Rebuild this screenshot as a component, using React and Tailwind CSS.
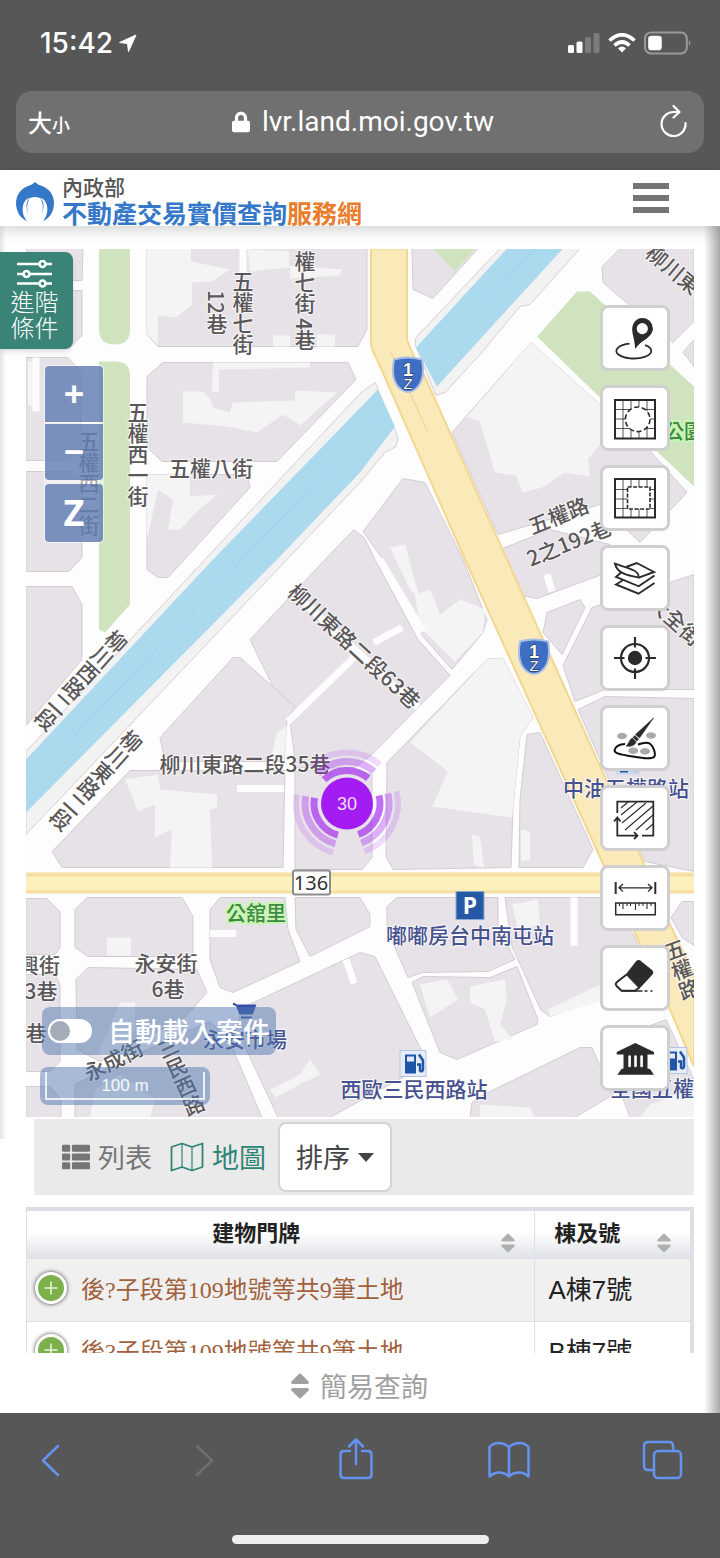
import React, { useState } from 'react';
import { FaLocationArrow, FaLock, FaSort, FaThList } from 'react-icons/fa';

const BLOCKS = [
  '26,249 83,249 82,281 26,281',
  '26,291 82,291 82,336 70,348 26,348',
  '26,358 68,358 81,373 81,447 68,461 26,461',
  '26,472 72,472 82,480 82,558 69,572 26,572',
  '26,587 72,587 82,605 82,660 26,726',
  '147,249 367,249 367,330 358,347 158,347 147,335',
  '163,363 348,363 356,380 277,462 162,462 147,448 147,377',
  '147,475 247,475 250,488 168,578 158,578 147,570',
  '363,532 403,479 425,483 463,560 487,620 483,633 452,670 423,637 383,560',
  '250,640 325,560 354,530 364,538 375,560 418,640 450,676 413,713 372,755 355,768 296,768 290,722',
  '233,658 240,658 295,707 287,720 284,762 165,762 160,738',
  '130,771 285,771 283,868 62,868 52,852',
  '295,772 345,768 372,775 372,858 362,870 295,870',
  '488,659 503,659 533,718 520,737 513,807 511,868 393,870 386,857 387,763',
  '527,735 540,733 593,850 583,868 519,868 520,800',
  '412,249 478,249 433,299 413,290',
  '602,267 620,249 694,249 694,322 673,343 603,283',
  '683,353 694,340 694,367',
  '531,343 600,405 640,440 687,493 640,543 600,505 498,535 452,433',
  '500,550 550,530 610,545 610,572 537,599 521,596',
  '547,613 580,600 585,608 562,655 543,633',
  '592,608 694,575 694,690 605,690 575,702 563,666',
  '578,710 605,697 694,699 694,872 645,862',
  '26,899 47,899 60,912 60,948 55,955 26,955',
  '87,898 182,898 193,917 193,957 88,957 75,948 75,910',
  '26,975 55,975 60,985 60,1062 50,1072 26,1072',
  '88,968 197,970 207,993 185,1018 100,1062 77,1050 76,980',
  '75,1085 110,1067 210,1022 228,1038 262,1118 75,1118',
  '26,1087 50,1087 61,1100 61,1118 26,1118',
  '220,898 285,898 288,930 300,962 233,993 220,988 210,960 210,910',
  '295,898 360,898 370,915 370,927 310,957 296,930',
  '243,1008 360,953 375,957 422,1052 408,1075 330,1118 278,1118 236,1028',
  '397,898 498,898 498,927 515,960 488,972 423,973 408,978 387,930 387,907',
  '412,983 423,977 490,978 517,967 538,1020 537,1025 457,1060 440,1053',
  '505,898 600,898 632,933 655,980 550,1017 541,1011 512,947',
  '470,1118 472,1103 480,1097 580,1048 592,1048 613,1095 575,1118',
  '640,1030 666,1020 694,1080 694,1118 630,1118 614,1075',
  '671,918 682,902 694,902 694,946 682,938',
];

// open yards and unbuilt plots inside the blocks
const YARDS = [
  '147,249 191,249 191,262 230,270 212,282 192,283 192,305 176,318 158,316 158,345 147,335',
  '248,250 250,272 290,268 290,279 340,276 342,270 289,266 289,252',
  '273,336 290,336 290,347 273,347',
  '317,335 335,335 335,347 317,347',
  '183,392 203,392 210,400 213,408 230,413 233,403 295,401 295,391 337,393 300,426 283,415 257,433 227,427 183,423',
  '213,363 310,363 310,368 219,370 219,392 212,392',
  '147,475 190,475 190,497 217,495 197,512 180,530 168,530 173,500 158,490 147,540',
  '28,362 33,362 36,410 28,405',
  '488,659 503,659 533,718 520,737 512,818 432,807 448,772 410,743',
  '531,343 600,405 600,445 588,460 590,477 565,473 542,488 523,493 516,476 495,473 480,422 467,417',
  '415,595 430,590 440,615 460,600 485,610 483,633 455,662 420,628',
  '390,548 405,545 420,600 410,590',
  '125,780 158,775 160,790 217,795 217,808 210,810 212,868 170,868 172,830 155,838 155,805 138,812',
  '277,733 287,727 284,760 271,758',
  '107,938 131,938 131,956 107,956',
  '120,1003 135,1003 135,1030 115,1060 98,1055',
  '95,1090 120,1075 155,1100 150,1118 90,1118',
  '270,1090 300,1075 310,1060 320,1075 300,1085 275,1098',
  '420,985 447,980 458,1000 430,1018',
  '470,987 505,980 507,1000 500,1025 513,1040 495,1042 485,1010 470,1003',
  '512,905 538,900 540,925 518,930',
  '548,1010 600,985 640,990 550,1017',
  '472,835 480,837 484,868 474,866',
  '521,830 530,832 530,860 521,862',
  '480,1105 530,1108 535,1118 480,1118',
  '650,1105 694,1090 694,1118 640,1118',
];

const STREETS = [
  'M243 249V273',
  'M290 590L418 708',
  'M288 722L356 656',
  'M574 898V946',
  'M547 575L552 592',
  'M237 789H284',
  'M210 934H236',
  'M346 960L354 984',
  'M36 358V412',
  'M374 643L402 628M380 560L423 632',
];

const LABELS = [
  { text: '五權七街', x: 243, y: 313, vertical: true },
  { text: '12巷', x: 217, y: 313, vertical: true },
  { text: '權七街 4巷', x: 305, y: 301, vertical: true },
  { text: '五權西一街', x: 138, y: 455, vertical: true },
  { text: '五權西二街', x: 89, y: 484, vertical: true },
  { text: '五權八街', x: 211, y: 467 },
  { text: '柳川西路二段', x: 81, y: 681, vertical: true, rotate: 42 },
  { text: '柳川東路二段', x: 96, y: 781, vertical: true, rotate: 42 },
  { text: '柳川東路二段63巷', x: 355, y: 646, rotate: 43 },
  { text: '柳川東路二段35巷', x: 245, y: 763 },
  { text: '柳川東', x: 674, y: 269, rotate: 40 },
  { text: '五權路', x: 558, y: 515, rotate: -22 },
  { text: '2之192巷', x: 569, y: 542, rotate: -22 },
  { text: '大全街', x: 676, y: 620, rotate: 42 },
  { text: '永安街', x: 166, y: 962 },
  { text: '6巷', x: 168, y: 988 },
  { text: '興街', x: 39, y: 964 },
  { text: '3巷', x: 41, y: 990 },
  { text: '巷', x: 36, y: 1032 },
  { text: '永成街', x: 113, y: 1060, rotate: -27 },
  { text: '三民西路', x: 181, y: 1077, vertical: true, rotate: -24 },
  { text: '五權路', x: 682, y: 970, vertical: true, rotate: -20 },
];

const PLACES = [
  { text: '嘟嘟房台中南屯站', x: 470, y: 934 },
  { text: '西歐三民西路站', x: 414, y: 1088 },
  { text: '中油五權路站', x: 626, y: 787 },
  { text: '全國五權', x: 652, y: 1087 },
  { text: '永安市場', x: 245, y: 1038 },
];

const ROWS = [
  { id: 1, address: '後?子段第109地號等共9筆土地', unit: 'A棟7號' },
  { id: 2, address: '後?子段第109地號等共9筆土地', unit: 'B棟7號' },
];

const MapLabel = ({ text, x, y, rotate = 0, vertical = false }) => (
  <text
    transform={`translate(${x} ${y}) rotate(${rotate})`}
    textAnchor="middle"
    dominantBaseline="central"
    className={vertical ? '[writing-mode:vertical-rl]' : ''}
  >
    {text}
  </text>
);

const RouteShield = ({ x, y }) => (
  <g transform={`translate(${x} ${y})`} className="font-['Liberation_Sans',sans-serif]">
    <path d="M-14 -15Q0 -19 14 -15Q18 6 7 15Q0 20 -7 15Q-18 6 -14 -15Z" fill="#3f6fc4" stroke="#a9bfe4" strokeWidth="2" />
    <text textAnchor="middle" y="1" fontSize="18" fontWeight="700" fill="#fff" stroke="#1c2c50" strokeWidth="1" paintOrder="stroke">1</text>
    <text textAnchor="middle" y="14" fontSize="15" fill="#fff" stroke="#1c2c50" strokeWidth="1" paintOrder="stroke">Z</text>
  </g>
);

const GasStation = ({ x, y }) => (
  <g transform={`translate(${x} ${y})`}>
    <rect x="-13" y="-13" width="26" height="26" fill="#e6edf8" stroke="#b5c4e0" />
    <path d="M-8 -9H3V10H-8Z" fill="#1f56a8" />
    <path d="M-6 -7H1V-2H-6Z" fill="#e6edf8" />
    <path d="M4 1H7V7Q9 9 10 6V-3L6 -9" fill="none" stroke="#1f56a8" strokeWidth="2.5" />
  </g>
);

const arcPath = (radius, center) => {
  const point = (deg) => {
    const rad = (deg * Math.PI) / 180;
    return `${radius * Math.cos(rad)} ${radius * Math.sin(rad)}`;
  };
  return `M${point(center - 42)}A${radius} ${radius} 0 0 1 ${point(center + 42)}`;
};

const ClusterMarker = ({ x, y, count }) => (
  <g transform={`translate(${x} ${y})`}>
    {[28, 148, 268].map((center) => (
      <g key={center} fill="none" stroke="#a020f0">
        <path d={arcPath(33, center)} strokeWidth="7" strokeOpacity="0.65" />
        <path d={arcPath(42, center)} strokeWidth="7" strokeOpacity="0.35" />
        <path d={arcPath(51, center)} strokeWidth="6" strokeOpacity="0.16" />
      </g>
    ))}
    <circle r="26" fill="#a31df3" />
    <text textAnchor="middle" y="6" fontSize="18" fill="#f3dcff" className="font-['Liberation_Sans',sans-serif]">{count}</text>
  </g>
);

const StreetMap = () => (
  <svg
    viewBox="26 249 668 869"
    preserveAspectRatio="xMidYMid slice"
    className="absolute inset-0 h-full w-full font-['Noto_Sans_CJK_TC',sans-serif]"
    role="img"
    aria-label="地圖"
  >
    <rect x="26" y="249" width="668" height="869" fill="#fefdfe" />
    <g fill="#e7e2e8" stroke="#d3cdd2" strokeWidth="1" strokeLinejoin="round">
      {BLOCKS.map((points) => <polygon key={points} points={points} />)}
    </g>
    <g fill="#f5f4f5">
      {YARDS.map((points) => <polygon key={points} points={points} />)}
    </g>
    <g fill="none" stroke="#fefdfe" strokeWidth="7">
      {STREETS.map((d) => <path key={d} d={d} />)}
    </g>

    {/* green belts and park */}
    <g fill="#cfe3bf">
      <path d="M99 249H130V330Q130 345 115 345Q99 345 99 330Z" />
      <path d="M99 362H115Q130 362 130 376V605L105 633L99 630Z" />
      <polygon points="433,249 475,249 455,272" />
      <polygon points="537,337 577,292 590,292 610,310 694,387 694,487 655,450 600,398" />
    </g>

    {/* canal */}
    <g fill="#f3f2f2" stroke="#d6cfcd" strokeWidth="1">
      <polygon points="26,752 205,560 360,394 375,383 398,438 396,447 385,453 360,483 287,560 26,835" />
      <polygon points="415,345 416,338 500,249 580,249 530,305 520,307 480,355 445,393 436,396" />
    </g>
    <g fill="#abd9ee">
      <polygon points="26,760 213,560 378,390 395,427 360,473 277,560 26,813" />
      <polygon points="416,348 507,249 563,249 437,387" />
    </g>
    <path d="M26 787L245 557L383 412M428 362L536 249" fill="none" stroke="#9bcfea" strokeWidth="1" />

    {/* provincial road and county road 136 */}
    <polygon points="26,873 694,873 694,894 26,894" fill="#f6dfa2" />
    <polygon points="26,877 694,877 694,891 26,891" fill="#fcf0bd" />
    <path
      d="M371 249H407V340Q412 355 423 373L507 560L643 862L670 925L694 975V1067L670 1010L602 862L465 560L377 360Q371 350 371 343Z"
      fill="#fae9b9"
      stroke="#f3d690"
      strokeWidth="2"
    />
    <path d="M391 352L428 433" stroke="#f3d084" strokeWidth="1" />

    <g fontSize="21" fontWeight="500" fill="#5a5759" stroke="#fff" strokeWidth="2" strokeOpacity="0.7" paintOrder="stroke">
      {LABELS.map((label, index) => <MapLabel key={index} {...label} />)}
    </g>
    <g fontSize="21" fontWeight="500" fill="#47518f" stroke="#fff" strokeWidth="2" strokeOpacity="0.8" paintOrder="stroke">
      {PLACES.map((label) => <MapLabel key={label.text} {...label} />)}
    </g>
    <g fontSize="20" fontWeight="500" stroke="#c9f5b4" strokeWidth="4" paintOrder="stroke" fill="#3d8a45">
      <MapLabel text="公舘里" x={256} y={913} />
      <MapLabel text="公園" x={684} y={431} />
    </g>

    <rect x="293" y="871" width="37" height="24" rx="2" fill="#fff" stroke="#8c8c8c" strokeWidth="2" />
    <text x="311" y="890" textAnchor="middle" fontSize="20" fill="#333" className="font-['Noto_Sans',sans-serif]">136</text>
    <RouteShield x={408} y={375} />
    <RouteShield x={534} y={657} />

    <rect x="456" y="892" width="28" height="28" fill="#2558a5" stroke="#8faad2" />
    <text x="470" y="914" textAnchor="middle" fontSize="23" fontWeight="700" fill="#fff" className="font-['Noto_Sans',sans-serif]">P</text>
    <GasStation x={413} y={1064} />
    <GasStation x={674} y={1061} />
    <path d="M233 1004L237 1006L240 1014H252L255 1006H238M241 1018H252" fill="#3550a8" stroke="#3550a8" strokeWidth="2" />
    <path d="M616 768H640V775H616Z" fill="#c9d8ee" />
    <path d="M620 766H628V773H620ZM632 766H636V773" fill="#2558a5" />

    <ClusterMarker x={347} y={804} count={30} />
  </svg>
);

const ToolIcon = ({ children }) => (
  <svg viewBox="0 0 44 44" className="size-11" fill="none" stroke="#2b2b2b" strokeWidth="1.6" aria-hidden="true">
    {children}
  </svg>
);

const GRID_LINES = 'M10 4V42M18 4V42M26 4V42M34 4V42M2 13.5H42M2 23H42M2 32.5H42';

const TOOLS = [
  {
    name: '定位點',
    icon: (
      <ToolIcon>
        <path d="M32 29.2A17.5 7.5 0 1 1 16.5 27.7" strokeWidth="1.8" />
        <path
          d="M29.3 2A10.6 10.6 0 0 1 39.9 12.6C39.9 17 36 21.5 31.5 24C27.5 26.5 24.5 29.5 22.2 33C22 27 20.5 22 19.5 17C18 9 22 2 29.3 2ZM29.3 7A5.6 5.6 0 1 0 29.3 18.2A5.6 5.6 0 1 0 29.3 7Z"
          fill="#2b2b2b"
          fillRule="evenodd"
          stroke="none"
        />
      </ToolIcon>
    ),
  },
  {
    name: '圓形範圍',
    icon: (
      <ToolIcon>
        <path d={GRID_LINES} strokeWidth="0.8" />
        <rect x="2" y="4" width="40" height="38.5" strokeWidth="2" />
        <circle cx="24.7" cy="23.3" r="12.3" fill="#fff" strokeDasharray="5 2.7" />
      </ToolIcon>
    ),
  },
  {
    name: '矩形範圍',
    icon: (
      <ToolIcon>
        <path d={GRID_LINES} strokeWidth="0.8" />
        <rect x="2" y="3" width="40" height="38.5" strokeWidth="2" />
        <rect x="14.5" y="11" width="22.5" height="22" fill="#fff" strokeDasharray="4 1.6" />
      </ToolIcon>
    ),
  },
  {
    name: '圖層',
    icon: (
      <ToolIcon>
        <path d="M2 7.7C7 9.5 16 12 21 14.5C24 16 26 19 25.5 21.5C17 20 4 18 2 7.7Z" strokeWidth="1.9" />
        <path d="M13 11L23.7 7L41 16L25.7 21.7M8 16.5L3 21L25.7 30.3L41.5 19.5M9.5 24.5L3 28.5L25.5 37.7L41.5 27" strokeWidth="1.9" />
      </ToolIcon>
    ),
  },
  {
    name: '目前位置',
    icon: (
      <ToolIcon>
        <circle cx="22" cy="22" r="14" strokeWidth="2.2" />
        <circle cx="22" cy="22" r="7.2" fill="#2b2b2b" stroke="none" />
        <path d="M1 22H11.5M32.5 22H43M22 1V11.5M22 32.5V43" strokeWidth="2.2" />
      </ToolIcon>
    ),
  },
  {
    name: '調色',
    icon: (
      <ToolIcon>
        <g fill="#a9a9a9" stroke="none">
          <ellipse cx="9" cy="20" rx="5" ry="3.2" />
          <ellipse cx="38" cy="19.5" rx="5" ry="3.2" />
          <ellipse cx="20.3" cy="34.7" rx="5" ry="3.2" />
          <ellipse cx="32" cy="35.3" rx="5" ry="3.2" />
        </g>
        <path d="M12 28C6 28 2 31 1.5 34.5C2 38.5 12 39 20 40.5C28 42 38 43.5 41 41C43.5 38 40 30 37 27.8C34 25.5 29 27 25 28.5" stroke="#111" strokeWidth="2" />
        <path d="M40.5 2L26.5 22L22.5 18.5ZM21.8 19.5L25.5 23L24 25L20 21.5ZM19.3 22L23.2 25.8C22 29.5 18 31 13 30C16 28 16 24 19.3 22Z" fill="#2b2b2b" stroke="#2b2b2b" strokeWidth="0.6" />
      </ToolIcon>
    ),
  },
  {
    name: '量測面積',
    icon: (
      <ToolIcon>
        <path d="M4.3 17V5.7H40.3V39.7H29M4.3 22V39.7H24M1 25.5L4.3 21.5L7.6 25.5M21 36.2L24.5 39.7L21 43.2" strokeWidth="1.8" />
        <path d="M8 12L15 6M8 19L24 6M9 27L33 7M12 34L40 10M23 34L40 19M33 34L40 28" strokeWidth="1.1" />
      </ToolIcon>
    ),
  },
  {
    name: '量測距離',
    icon: (
      <ToolIcon>
        <path d="M2.7 6V18M42.3 6V18" strokeWidth="2" />
        <path d="M6 11.8H39M10 8L6 11.8L10 15.6M35 8L39 11.8L35 15.6" strokeWidth="1.3" />
        <path d="M2.7 27H42.3V38.7H2.7Z" strokeWidth="1.5" />
        <path d="M6.5 27V30M10 27V33M14 27V30M17.5 27V30M22.5 27V34M26 27V30M30 27V30M34 27V33M38 27V30" strokeWidth="1.1" />
      </ToolIcon>
    ),
  },
  {
    name: '清除',
    icon: (
      <ToolIcon>
        <path d="M13.7 18.5L23.5 6Q25.5 3.8 28 6L38.5 14.5Q40.3 16.2 38.7 18.3L26.3 31.7Z" fill="#2b2b2b" />
        <path d="M13.7 18.5L4.3 25.7Q1.5 28 3.8 30.2L8.5 34.7H22L26.3 31.5" strokeWidth="2" />
        <path d="M9 35H29.5M31.5 35H34.5M37.5 35H39.5" />
      </ToolIcon>
    ),
  },
  {
    name: '公共設施',
    icon: (
      <ToolIcon>
        <path d="M22.3 7L41 16V18.5H34.5V32.5L37 33L41 38.7H4.3L8.5 33L10.5 32.5V18.5H3.7V16Z" fill="#2b2b2b" stroke="none" />
        <path d="M16.6 20.5V30M22.5 20.5V30M28.6 20.5V30" stroke="#fff" strokeWidth="2.6" strokeLinecap="round" />
      </ToolIcon>
    ),
  },
];

const StatusBar = () => (
  <div className="flex items-center justify-between px-10 pt-[27px] pb-8 text-white">
    <div className="flex items-center gap-1.5">
      <span className="text-[28px] leading-8 font-medium">15:42</span>
      <svg viewBox="0 0 18 18" className="size-[18px]" aria-hidden="true">
        <path d="M17 1L0.500 8.500L8.500 9.500L9.500 17.500Z" fill="#fff" stroke="#fff" strokeLinejoin="round" />
      </svg>
    </div>
    <div className="-mr-3 flex items-center gap-2">
      <svg viewBox="0 0 32 22" className="h-6 w-8" aria-hidden="true">
        <rect x="0" y="13" width="6" height="8" rx="1.5" fill="#fff" />
        <rect x="8.5" y="9.5" width="6" height="11.5" rx="1.5" fill="#fff" />
        <rect x="17" y="5" width="6" height="16" rx="1.5" fill="#7c7c7c" />
        <rect x="25.5" y="1" width="6" height="20" rx="1.5" fill="#7c7c7c" />
      </svg>
      <svg viewBox="0 0 28 20" className="h-5 w-7" fill="none" stroke="#fff" strokeWidth="3.6" aria-hidden="true">
        <path d="M1.5 7.5Q14 -4 26.5 7.5" />
        <path d="M6.5 12.5Q14 5.5 21.5 12.5" />
        <path d="M10 15.2Q14 12 18 15.2L14 19.5Z" fill="#fff" stroke="none" />
      </svg>
      <svg viewBox="0 0 46 22" className="h-6 w-12" aria-hidden="true">
        <rect x="1" y="1" width="40" height="20" rx="5.5" fill="none" stroke="#9a9a9a" strokeWidth="2" />
        <rect x="4" y="4" width="13" height="14" rx="3" fill="#fff" />
        <path d="M43 8Q46 11 43 14Z" fill="#9a9a9a" />
      </svg>
    </div>
  </div>
);

const AddressBar = () => (
  <div className="mx-4 flex h-[62px] items-center justify-between rounded-2xl bg-[#707070] px-3 text-white">
    <button type="button" className="flex items-baseline font-['Noto_Sans_CJK_TC',sans-serif] font-medium">
      <span className="text-2xl leading-8">大</span>
      <span className="text-lg">小</span>
    </button>
    <div className="flex items-center gap-3">
      <FaLock className="h-6 w-[18px]" />
      <span className="font-['Roboto',sans-serif] text-[28px] leading-8">lvr.land.moi.gov.tw</span>
    </div>
    <button type="button" aria-label="重新載入">
      <svg viewBox="0 0 32 36" className="h-9 w-9" fill="none" stroke="#fff" strokeWidth="2.2" strokeLinecap="round" strokeLinejoin="round">
        <path d="M27.5 19A12 12 0 1 1 16 8H21" />
        <path d="M15.5 2L21.500 8L15.5 13.5" />
      </svg>
    </button>
  </div>
);

const SiteHeader = () => (
  <header className="relative z-10 flex h-14 items-center justify-between bg-white pr-[51px] pl-4 shadow-[0_4px_14px_rgba(0,0,0,0.18)]">
    <a href="#home" className="flex items-center gap-2 font-['Noto_Sans_CJK_TC',sans-serif]">
      <svg viewBox="0 0 38 40" className="mt-2 h-10 w-[38px]" aria-hidden="true">
        <path
          d="M19 0C21 2 23 3 26 4C34 7 38 14 38 21C38 30 33 37 27 39C31 34 32 29 31 24C30 19 27 16 24 16C27 20 28 27 25 34C27 30 29 22 26 18C24 14 14 14 12 18C9 22 11 30 13 34C10 27 11 20 14 16C11 16 8 19 7 24C6 29 7 34 11 39C5 37 0 30 0 21C0 14 4 7 12 4C15 3 17 2 19 0Z"
          fill="#3577c8"
        />
      </svg>
      <span className="flex flex-col">
        <span className="text-[21px] leading-7 font-medium text-[#555]">內政部</span>
        <span className="text-[25px] leading-6 font-bold text-[#3577c8]">
          不動產交易實價查詢<span className="text-[#ea7d2c]">服務網</span>
        </span>
      </span>
    </a>
    <button type="button" aria-label="選單" className="flex w-9 flex-col gap-1.5">
      <span className="h-[6px] bg-[#757575]" />
      <span className="h-[6px] bg-[#757575]" />
      <span className="h-[6px] bg-[#757575]" />
    </button>
  </header>
);

const MapPanel = () => {
  const [autoLoad, setAutoLoad] = useState(false);

  return (
    <div className="relative min-h-[820px] flex-1 overflow-hidden">
      <StreetMap />

      <div className="absolute top-[116px] left-[18px] flex flex-col rounded bg-white/50 p-px font-['Open_Sans',sans-serif] font-bold text-white">
        <button type="button" aria-label="放大" className="h-14 w-[58px] rounded-t bg-[#4466a4]/70 text-4xl">+</button>
        <button type="button" aria-label="縮小" className="mt-0.5 h-14 w-[58px] rounded-b bg-[#4466a4]/70 text-4xl">−</button>
        <button type="button" className="mt-1 h-[58px] w-[58px] rounded bg-[#4466a4]/70 text-4xl">Z</button>
      </div>

      <div className="absolute top-14 right-6 flex flex-col gap-3.5">
        {TOOLS.map((tool) => (
          <button
            key={tool.name}
            type="button"
            aria-label={tool.name}
            className="flex h-[66px] w-[70px] items-center justify-center rounded-lg border-[3px] border-[#cfcfcf] bg-white"
          >
            {tool.icon}
          </button>
        ))}
      </div>

      <div className="absolute bottom-3 left-3.5 flex flex-col items-start gap-3">
        <label className="ml-0.5 flex h-12 items-center gap-4 rounded-lg bg-[#5277b0]/50 px-1.5 font-['Noto_Sans_CJK_TC',sans-serif] text-[27px] leading-8 font-medium text-white">
          <input
            type="checkbox"
            role="switch"
            checked={autoLoad}
            onChange={(e) => setAutoLoad(e.target.checked)}
            className="h-6 w-11 appearance-none rounded-full bg-white before:block before:size-6 before:rounded-full before:border-2 before:border-white before:bg-[#a3adb9] checked:before:translate-x-5"
          />
          自動載入案件
        </label>
        <div className="h-[38px] w-[170px] rounded-lg bg-[#5277b0]/50 px-[5px] py-[5px]">
          <div className="h-full border-2 border-t-0 border-white/80 text-center font-['Liberation_Sans',sans-serif] text-[17px] leading-7 text-white/90">
            100 m
          </div>
        </div>
      </div>
    </div>
  );
};

const ViewBar = () => (
  <div className="mt-0.5 ml-2 flex h-[76px] items-center bg-[#eaeaea] pl-7 font-['Noto_Sans_CJK_TC',sans-serif] text-[27px] leading-9">
    <button type="button" className="flex items-center gap-2 text-[#757575]">
      <FaThList className="size-7" />
      列表
    </button>
    <button type="button" className="ml-[18px] flex items-center gap-2 text-[#2f8575]">
      <svg viewBox="0 0 34 30" className="h-[30px] w-[34px]" fill="none" stroke="currentColor" strokeWidth="1.8" strokeLinejoin="round" aria-hidden="true">
        <path d="M1.5 5L12 1.5L22 5L32.5 1.5V25L22 28.5L12 25L1.5 28.5Z" />
        <path d="M12 1.5V25M22 5V28.5" strokeWidth="1.2" />
      </svg>
      地圖
    </button>
    <button type="button" className="ml-3 flex h-[70px] items-center gap-2 rounded-lg border-2 border-[#d4d4d4] bg-white px-4 text-[#444]">
      排序
      <span className="border-x-8 border-t-[9px] border-x-transparent border-t-[#444]" />
    </button>
  </div>
);

const ResultTable = () => (
  <div className="mt-3 h-[146px] overflow-hidden">
    <table className="w-full border-collapse border border-t-4 border-r-4 border-[#dcdfe3] font-['Noto_Sans_CJK_TC',sans-serif]">
      <thead>
        <tr className="h-[50px] bg-linear-to-b from-white from-45% to-[#dee2e6] text-[22px] leading-7 font-bold text-[#222]">
          <th className="relative border-r border-[#dcdfe3] pr-12 pb-2">
            建物門牌
            <FaSort className="absolute right-3.5 bottom-1 size-6 text-[#b0b0b0]" />
          </th>
          <th className="relative w-[158px] pr-[50px] pb-2">
            棟及號
            <FaSort className="absolute right-3.5 bottom-1 size-6 text-[#b0b0b0]" />
          </th>
        </tr>
      </thead>
      <tbody>
        {ROWS.map((row) => (
          <tr key={row.id} className="h-[62px] border-b border-[#dcdfe3] odd:bg-[#f0f0f0]">
            <td className="border-r border-[#dcdfe3] pl-2">
              <div className="flex items-center gap-3.5">
                <button
                  type="button"
                  aria-label="展開"
                  className="mb-1 flex size-8 items-center justify-center rounded-full border-[3px] border-white bg-[#7cb04c] shadow-[0_0_4px_#444]"
                >
                  <svg viewBox="0 0 14 14" className="size-3.5" stroke="#e6f4d8" strokeWidth="1.6" aria-hidden="true">
                    <path d="M7 0.5V13.5M0.5 7H13.5" />
                  </svg>
                </button>
                <a href="#detail" className="font-['Liberation_Serif','Noto_Sans_CJK_TC',serif] text-2xl leading-8 text-[#a0613c]">
                  {row.address}
                </a>
              </div>
            </td>
            <td className="pl-3.5 font-['Liberation_Sans','Noto_Sans_CJK_TC',sans-serif] text-[26px] leading-8 text-[#222]">{row.unit}</td>
          </tr>
        ))}
      </tbody>
    </table>
  </div>
);

const NavButton = ({ label, className = '', children }) => (
  <button type="button" aria-label={label} className={`flex w-11 justify-center ${className}`}>
    <svg viewBox="0 0 44 46" className="h-[46px] w-11" fill="none" stroke="currentColor" strokeWidth="2.5" strokeLinecap="round" strokeLinejoin="round">
      {children}
    </svg>
  </button>
);

const BrowserToolbar = () => (
  <nav className="bg-[#575757] pt-6 pr-9 pb-3.5 pl-7">
    <div className="flex items-center justify-between text-[#6593f0]">
      <NavButton label="上一頁">
        <path d="M30 9L15 23.5L30 38" />
      </NavButton>
      <NavButton label="下一頁" className="text-[#6f6f6f]">
        <path d="M16 9L31 23.5L16 38" />
      </NavButton>
      <NavButton label="分享">
        <path d="M16 14H10Q6.5 14 6.5 17.5V37.5Q6.5 41 10 41H34Q37.5 41 37.5 37.5V17.5Q37.5 14 34 14H28" />
        <path d="M22 27V3M15 9.500L22 2.5L29 9.5" />
      </NavButton>
      <NavButton label="書籤">
        <path d="M22 10Q17 6 11.5 6Q6 6 2.5 10V39.5Q7 35.5 11.5 35.5Q18 35.5 22 39.5Q26 35.5 32.5 35.5Q37 35.5 41.5 39.5V10Q38 6 32.5 6Q27 6 22 10ZM22 10V39.5" />
      </NavButton>
      <NavButton label="分頁">
        <rect x="14" y="14" width="27" height="27" rx="4" />
        <path d="M14 33H8Q4 33 4 29V9Q4 5 8 5H29Q33 5 33 9V14" />
      </NavButton>
    </div>
    <div className="mr-1 flex justify-center pt-[52px] pl-3">
      <div className="h-[9px] w-[257px] rounded-full bg-[#eee]" />
    </div>
  </nav>
);

const App = () => (
  <div className="flex min-h-screen flex-col bg-[#575757] font-['Inter','Noto_Sans_CJK_TC',sans-serif]">
    <StatusBar />
    <AddressBar />
    <div className="relative mt-[17px] flex flex-1 flex-col bg-white">
      <SiteHeader />
      <main className="flex flex-1 flex-col px-[26px] pt-[23px]">
        <MapPanel />
        <ViewBar />
        <ResultTable />
        <button type="button" className="mx-auto flex h-[60px] items-center gap-1 pt-1.5 pr-2 font-['Noto_Sans_CJK_TC',sans-serif] text-[27px] leading-9 text-[#a0a0a0]">
          <FaSort className="size-8" />
          簡易查詢
        </button>
      </main>
      <button
        type="button"
        className="absolute top-[82px] left-0 z-20 flex h-[97px] w-[73px] flex-col items-center rounded-r-lg bg-[#3a8377] pt-2 pr-1 font-['Noto_Sans_CJK_TC',sans-serif] text-2xl leading-[26px] font-light text-white shadow-md"
      >
        <svg viewBox="0 0 36 28" className="h-7 w-9 shrink-0" fill="none" stroke="#fff" strokeWidth="2.6" aria-hidden="true">
          <path d="M0 4H22M29 4H35M0 14H6M13 14H35M0 23.5H22M29 23.5H35" />
          <circle cx="25.5" cy="4" r="3" />
          <circle cx="9.5" cy="14" r="3" />
          <circle cx="25.5" cy="23.5" r="3" />
        </svg>
        <span>
          進階
          <br />
          條件
        </span>
      </button>
      <div className="absolute top-14 right-0 bottom-0 w-4 bg-linear-to-r from-transparent to-[#a8a8a8]" />
      <div className="absolute top-14 bottom-[274px] left-0 w-1.5 bg-linear-to-r from-[#e4e4e4] to-transparent" />
    </div>
    <BrowserToolbar />
  </div>
);

export default App;
